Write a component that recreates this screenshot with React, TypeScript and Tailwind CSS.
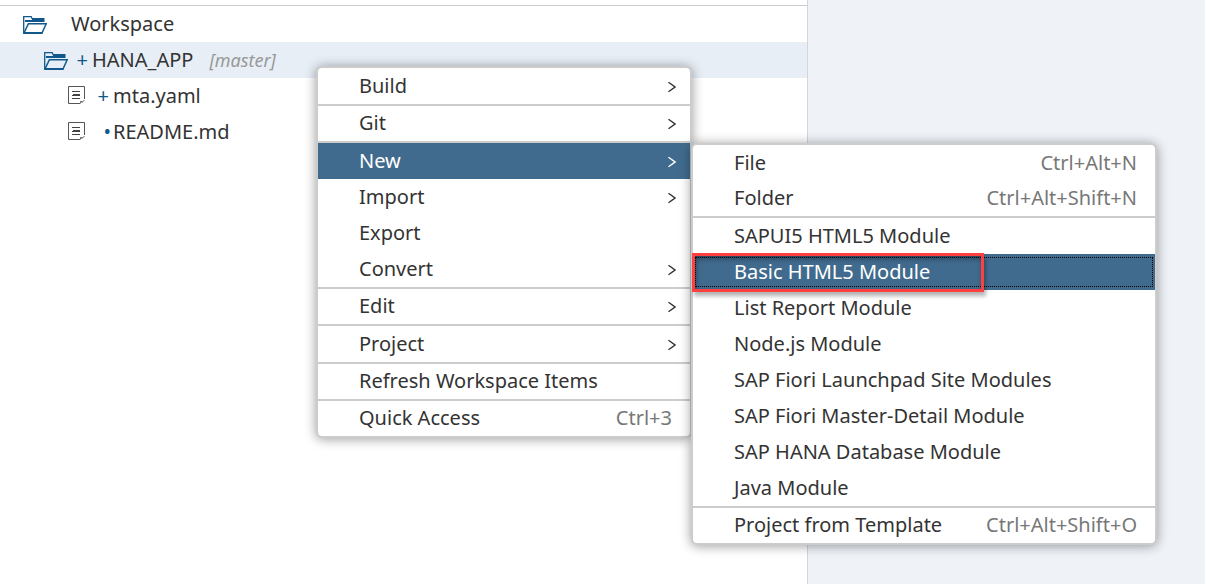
import type { ReactNode } from "react";

type MenuEntry = {
  label: string;
  shortcut?: string;
  children?: MenuEntry[];
  open?: boolean;
  focused?: boolean;
  compact?: boolean;
  divider?: boolean;
};

const newItems: MenuEntry[] = [
  { label: "File", shortcut: "Ctrl+Alt+N" },
  { label: "Folder", shortcut: "Ctrl+Alt+Shift+N", compact: true, divider: true },
  { label: "SAPUI5 HTML5 Module" },
  { label: "Basic HTML5 Module", focused: true },
  { label: "List Report Module" },
  { label: "Node.js Module" },
  { label: "SAP Fiori Launchpad Site Modules" },
  { label: "SAP Fiori Master-Detail Module" },
  { label: "SAP HANA Database Module" },
  { label: "Java Module", divider: true },
  { label: "Project from Template", shortcut: "Ctrl+Alt+Shift+O", compact: true },
];

const contextItems: MenuEntry[] = [
  { label: "Build", children: [], divider: true },
  { label: "Git", children: [], compact: true, divider: true },
  { label: "New", children: newItems, open: true },
  { label: "Import", children: [] },
  { label: "Export" },
  { label: "Convert", children: [], divider: true },
  { label: "Edit", children: [], compact: true, divider: true },
  { label: "Project", children: [], divider: true },
  { label: "Refresh Workspace Items", compact: true, divider: true },
  { label: "Quick Access", shortcut: "Ctrl+3", compact: true },
];

function FolderIcon() {
  return (
    <svg className="mt-0.5 h-[18px] w-6 shrink-0" viewBox="0 0 24 18" fill="none" aria-hidden="true">
      <path d="M0.7 17V0.7H8.2L9.3 3" stroke="#11598c" strokeWidth="1.3" />
      <path d="M9 2H21.5V6H2V4H9Z" fill="#11598c" />
      <path d="M1 17L5.4 7.7H23.2L19 17Z" stroke="#11598c" strokeWidth="1.5" />
      <path d="M0.4 17H19.4" stroke="#11598c" strokeWidth="2" />
    </svg>
  );
}

function FileIcon() {
  return (
    <svg className="-mt-0.5 h-[18px] w-[18px] shrink-0" viewBox="0 0 18 18" fill="none" aria-hidden="true">
      <path d="M12 17.5H0.5V0.5H16.5V13" stroke="#555" strokeWidth="1" />
      <path d="M12.5 17.5V15.5H14.5M13.5 17L16.5 14" stroke="#666" strokeWidth="1" />
      <path d="M4 5.5H12M5 8.5H12M4 9.5H12M4 12.5H12" stroke="#444" strokeWidth="1" />
    </svg>
  );
}

function Chevron() {
  return (
    <svg className="mr-3.5 h-3 w-2 shrink-0 translate-y-px" viewBox="0 0 8 12" fill="none" aria-hidden="true">
      <path d="M0.5 1.2L7 6L0.5 10.8" stroke="currentColor" strokeWidth="1.4" />
    </svg>
  );
}

function Menu({ label, items, className }: { label: string; items: MenuEntry[]; className: string }) {
  return (
    <ul
      role="menu"
      aria-label={label}
      className={`absolute rounded-md border-2 border-[#ccc] bg-white shadow-[0_1px_12px_rgba(0,0,0,0.4)] ${className}`}
    >
      {items.map((item) => (
        <MenuRow key={item.label} item={item} />
      ))}
    </ul>
  );
}

function MenuRow({ item }: { item: MenuEntry }) {
  const active = item.open || item.focused;
  return (
    <li
      role="none"
      className={`relative ${item.open ? "z-10" : ""} ${item.divider ? "border-b-2 border-[#ccc]" : ""}`}
    >
      <button
        type="button"
        role="menuitem"
        aria-haspopup={item.children ? "menu" : undefined}
        aria-expanded={item.children ? Boolean(item.open) : undefined}
        className={`flex w-full items-center justify-between pl-[41px] text-left ${
          item.compact ? "h-[35px] pb-px" : "h-9"
        } ${active ? "bg-[#416b8e] text-white" : "text-[#333]"}`}
      >
        <span>{item.label}</span>
        {item.shortcut && <span className="mr-[18px] text-[#777]">{item.shortcut}</span>}
        {item.children && <Chevron />}
      </button>
      {item.focused && (
        <>
          <span className="pointer-events-none absolute inset-x-0.5 inset-y-[3px] border border-dotted border-black" />
          <span className="pointer-events-none absolute -top-px -bottom-0.5 -left-px w-[292px] border-[3px] border-[#ff4040] shadow-[2px_4px_4px_rgba(0,0,0,0.3),inset_1px_3px_5px_rgba(0,0,0,0.4)]" />
        </>
      )}
      {item.open && item.children && (
        <Menu label={item.label} items={item.children} className="top-0 left-full ml-px w-[466px]" />
      )}
    </li>
  );
}

function TreeRow({ className, children }: { className: string; children: ReactNode }) {
  return (
    <li role="treeitem" className={`flex h-9 items-center ${className}`}>
      {children}
    </li>
  );
}

export default function App() {
  return (
    <div className="relative flex min-h-screen overflow-hidden bg-[#eff3f8] font-['Noto_Sans',sans-serif] text-[20px] leading-6 text-[#333]">
      <aside className="box-content w-[67%] shrink-0 border-r border-[#d3d7dc] bg-white pt-[5px]">
        <ul role="tree" aria-label="Workspace files" className="border-t border-[#ccc]">
          <TreeRow className="gap-6 pl-[23px]">
            <FolderIcon />
            <span>Workspace</span>
          </TreeRow>
          <TreeRow className="bg-[#e7eef6] pl-11">
            <FolderIcon />
            <span className="w-6 pr-1 text-right text-[#11598c]">+</span>
            <span>HANA_APP</span>
            <span className="ml-4 text-[18px] text-[#999] italic">[master]</span>
          </TreeRow>
          <TreeRow className="pl-[68px]">
            <FileIcon />
            <span className="w-[27px] pr-1 text-right text-[#11598c]">+</span>
            <span>mta.yaml</span>
          </TreeRow>
          <TreeRow className="pl-[68px]">
            <FileIcon />
            <span className="w-[27px] pr-0.5 text-right text-[#11598c]">•</span>
            <span>README.md</span>
          </TreeRow>
        </ul>
      </aside>
      <main className="flex-1" />
      <Menu label="Context menu" items={contextItems} className="top-[66px] left-[316px] w-[376px]" />
    </div>
  );
}
